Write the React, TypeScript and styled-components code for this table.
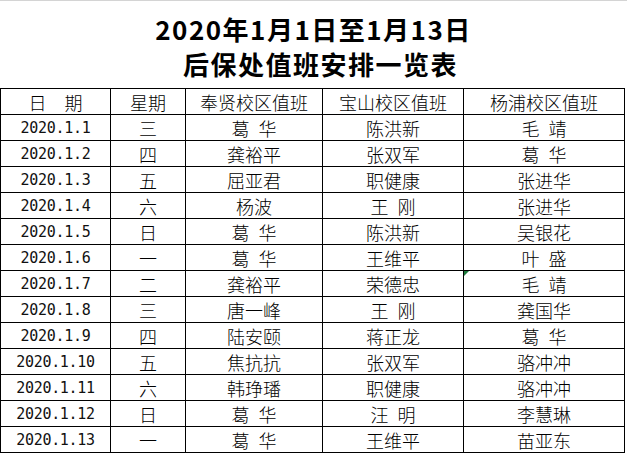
import * as React from "react";
import styled, { createGlobalStyle } from "styled-components";

const GlobalStyle = createGlobalStyle`
    html, body {
        margin: 0;
        padding: 0;
        background: #ffffff;
    }
`;

const Page = styled.div`
    width: 627px;
    height: 454px;
    overflow: hidden;
    background: #ffffff;
    border-top: 1px solid #d4d4d4;
    box-sizing: border-box;
`;

const TitleBlock = styled.div`
    height: 87px;
    display: flex;
    flex-direction: column;
    justify-content: center;
    align-items: center;
    padding-top: 3px;
    box-sizing: border-box;
    font-family: "Noto Sans CJK SC", "Noto Sans", sans-serif;
    font-weight: 700;
    font-size: 26px;
    letter-spacing: 1.5px;
    color: #000000;
`;

const TitleLine = styled.div<{ $shift?: number }>`
    line-height: 35px;
    padding-left: ${props => props.$shift || 0}px;
`;

const Sheet = styled.div`
    display: grid;
    grid-template-columns: 109px 74px 136px 140px 160px;
    grid-auto-rows: 25px;
    gap: 1px;
    padding: 1px;
    width: 625px;
    box-sizing: border-box;
    background: #000000;
`;

const Cell = styled.div<{ $flag?: boolean }>`
    position: relative;
    background: #ffffff;
    display: flex;
    align-items: center;
    justify-content: center;
    font-family: "Noto Sans CJK SC", "Noto Sans", sans-serif;
    font-size: 18px;
    font-weight: 300;
    color: #000000;
    white-space: pre;
    word-spacing: 5px;

    &::before {
        content: "";
        display: ${props => props.$flag ? 'block' : 'none'};
        position: absolute;
        left: 0;
        top: 0;
        width: 0;
        height: 0;
        border-top: 5px solid #1d7a3c;
        border-right: 5px solid transparent;
    }
`;

const DateText = styled.span`
    font-family: "DejaVu Sans Mono", "Liberation Mono", monospace;
    font-size: 15px;
    font-weight: 400;
    letter-spacing: -0.3px;
    word-spacing: 0;
    color: #111111;
`;

const headers = ['日  期', '星期', '奉贤校区值班', '宝山校区值班', '杨浦校区值班'];

const rows = [
    ['2020.1.1', '三', '葛 华', '陈洪新', '毛 靖'],
    ['2020.1.2', '四', '龚裕平', '张双军', '葛 华'],
    ['2020.1.3', '五', '屈亚君', '职健康', '张进华'],
    ['2020.1.4', '六', '杨波', '王 刚', '张进华'],
    ['2020.1.5', '日', '葛 华', '陈洪新', '吴银花'],
    ['2020.1.6', '一', '葛 华', '王维平', '叶 盛'],
    ['2020.1.7', '二', '龚裕平', '荣德忠', '毛 靖'],
    ['2020.1.8', '三', '唐一峰', '王 刚', '龚国华'],
    ['2020.1.9', '四', '陆安颐', '蒋正龙', '葛 华'],
    ['2020.1.10', '五', '焦抗抗', '张双军', '骆冲冲'],
    ['2020.1.11', '六', '韩琤璠', '职健康', '骆冲冲'],
    ['2020.1.12', '日', '葛 华', '汪 明', '李慧琳'],
    ['2020.1.13', '一', '葛 华', '王维平', '苗亚东'],
];

// the little green marker excel leaves in a cell
const flagged = {row: 6, col: 4};

export default function App() {
    return <Page>
        <GlobalStyle/>
        <TitleBlock>
            <TitleLine>2020年1月1日至1月13日</TitleLine>
            <TitleLine $shift={14}>后保处值班安排一览表</TitleLine>
        </TitleBlock>
        <Sheet>
            {headers.map((h, i) => <Cell key={'h' + i}>{h}</Cell>)}
            {rows.map((row, r) => row.map((value, c) =>
                <Cell key={r + '-' + c} $flag={r === flagged.row && c === flagged.col}>
                    {c === 0 ? <DateText>{value}</DateText> : value}
                </Cell>
            ))}
        </Sheet>
    </Page>;
}
